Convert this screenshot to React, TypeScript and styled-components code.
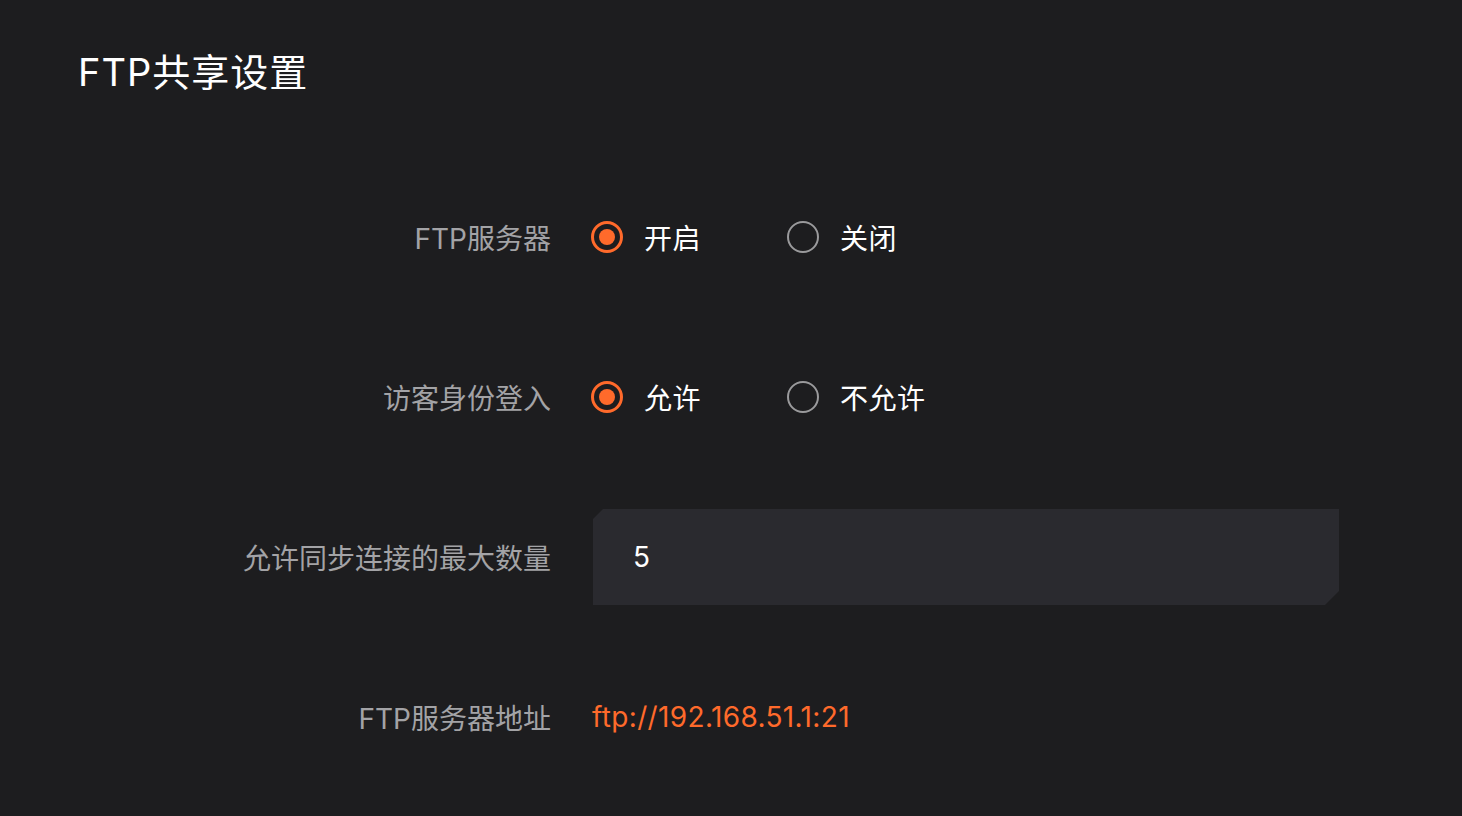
import React, { useState } from "react";
import styled, { createGlobalStyle } from "styled-components";

const Global = createGlobalStyle`
  html, body { margin: 0; padding: 0; background: #1d1d1f; }
  body { font-family: "Inter", "Noto Sans CJK SC", sans-serif; color: #fff; }
  * { box-sizing: border-box; }
`;

const Page = styled.div`
  width: 1462px;
  height: 816px;
  background: #1d1d1f;
  padding: 47px 0 0 78px;
  overflow: hidden;
`;

const Title = styled.h1`
  margin: 0;
  font-size: 38px;
  line-height: 50px;
  font-weight: 400;
  color: #ffffff;
  letter-spacing: 1px;
`;

const Form = styled.div`
  margin-top: 92px;
  display: grid;
  grid-template-columns: 473px 748px;
  column-gap: 40px;
  row-gap: 64px;
  grid-auto-rows: 96px;
  align-items: center;
`;

const Label = styled.div`
  text-align: right;
  font-size: 28px;
  color: #a3a3a6;
  font-weight: 400;
  white-space: nowrap;
`;

const Options = styled.div`
  display: flex;
  align-items: center;
`;

const Option = styled.label`
  display: flex;
  align-items: center;
  gap: 21px;
  margin-right: 86px;
  cursor: pointer;
  font-size: 28px;
  color: #ffffff;
  letter-spacing: 0.5px;
`;

const Circle = styled.span<{ $checked: boolean }>`
  width: 32px;
  height: 32px;
  border-radius: 50%;
  border: ${(p) => (p.$checked ? "3px solid #ff6a2b" : "2px solid #9a9a9c")};
  display: flex;
  align-items: center;
  justify-content: center;
  flex: none;
  &::after {
    content: "";
    width: 16px;
    height: 16px;
    border-radius: 50%;
    background: #ff6a2b;
    display: ${(p) => (p.$checked ? "block" : "none")};
  }
`;

const InputBox = styled.input`
  width: 746px;
  height: 96px;
  margin-left: 2px;
  border: none;
  outline: none;
  background: #2a2a2f;
  color: #ffffff;
  font-family: inherit;
  font-size: 28px;
  padding: 0 40px;
  clip-path: polygon(10px 0, 100% 0, 100% calc(100% - 14px), calc(100% - 14px) 100%, 0 100%, 0 10px);
`;

const Address = styled.div`
  font-size: 28px;
  color: #ff6a2b;
  margin-left: 1px;
  letter-spacing: 0.35px;
`;

type Opt = { value: string; text: string };

function RadioGroup({ options, value, onChange }: { options: Opt[]; value: string; onChange: (v: string) => void }) {
  return (
    <Options>
      {options.map((o) => (
        <Option key={o.value} onClick={() => onChange(o.value)}>
          <Circle $checked={value === o.value} />
          <span>{o.text}</span>
        </Option>
      ))}
    </Options>
  );
}

export default function App() {
  const [server, setServer] = useState("on");
  const [guest, setGuest] = useState("yes");
  const [max, setMax] = useState("5");
  return (
    <>
      <Global />
      <Page>
        <Title>FTP共享设置</Title>
        <Form>
          <Label>FTP服务器</Label>
          <RadioGroup
            value={server}
            onChange={setServer}
            options={[
              { value: "on", text: "开启" },
              { value: "off", text: "关闭" },
            ]}
          />
          <Label>访客身份登入</Label>
          <RadioGroup
            value={guest}
            onChange={setGuest}
            options={[
              { value: "yes", text: "允许" },
              { value: "no", text: "不允许" },
            ]}
          />
          <Label>允许同步连接的最大数量</Label>
          <InputBox value={max} onChange={(e) => setMax(e.target.value)} />
          <Label>FTP服务器地址</Label>
          <Address>ftp://192.168.51.1:21</Address>
        </Form>
      </Page>
    </>
  );
}
